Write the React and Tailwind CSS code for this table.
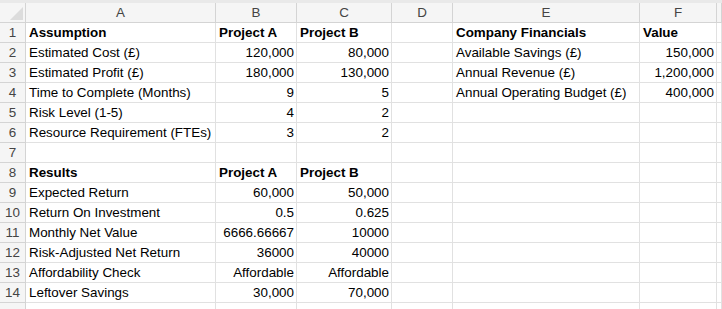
import React from "react";

const cols = ["A", "B", "C", "D", "E", "F", ""];
const rows = [
  [{ t: "Assumption", b: 1 }, { t: "Project A", b: 1 }, { t: "Project B", b: 1 }, {}, { t: "Company Financials", b: 1 }, { t: "Value", b: 1 }],
  [{ t: "Estimated Cost (£)" }, { t: "120,000", r: 1 }, { t: "80,000", r: 1 }, {}, { t: "Available Savings (£)" }, { t: "150,000", r: 1 }],
  [{ t: "Estimated Profit (£)" }, { t: "180,000", r: 1 }, { t: "130,000", r: 1 }, {}, { t: "Annual Revenue (£)" }, { t: "1,200,000", r: 1 }],
  [{ t: "Time to Complete (Months)" }, { t: "9", r: 1 }, { t: "5", r: 1 }, {}, { t: "Annual Operating Budget (£)" }, { t: "400,000", r: 1 }],
  [{ t: "Risk Level (1-5)" }, { t: "4", r: 1 }, { t: "2", r: 1 }, {}, {}, {}],
  [{ t: "Resource Requirement (FTEs)" }, { t: "3", r: 1 }, { t: "2", r: 1 }, {}, {}, {}],
  [{}, {}, {}, {}, {}, {}],
  [{ t: "Results", b: 1 }, { t: "Project A", b: 1 }, { t: "Project B", b: 1 }, {}, {}, {}],
  [{ t: "Expected Return" }, { t: "60,000", r: 1 }, { t: "50,000", r: 1 }, {}, {}, {}],
  [{ t: "Return On Investment" }, { t: "0.5", r: 1 }, { t: "0.625", r: 1 }, {}, {}, {}],
  [{ t: "Monthly Net Value" }, { t: "6666.66667", r: 1 }, { t: "10000", r: 1 }, {}, {}, {}],
  [{ t: "Risk-Adjusted Net Return" }, { t: "36000", r: 1 }, { t: "40000", r: 1 }, {}, {}, {}],
  [{ t: "Affordability Check" }, { t: "Affordable", r: 1 }, { t: "Affordable", r: 1 }, {}, {}, {}],
  [{ t: "Leftover Savings" }, { t: "30,000", r: 1 }, { t: "70,000", r: 1 }, {}, {}, {}],
  [{}, {}, {}, {}, {}, {}],
];

const grid = "grid grid-cols-[26px_190px_81px_95px_61px_187px_77px_1fr]";

export default function App() {
  return (
    <div
      className="w-[722px] h-[309px] overflow-hidden bg-white text-[13.4px] text-black"
      style={{ fontFamily: '"Liberation Sans", Arial, sans-serif' }}
    >
      <div className="h-[3px] bg-[#e9e9e9]" />
      <div className={`${grid} h-[20px] bg-[#f5f5f5] text-[#444]`}>
        <div className="relative border-r border-b border-[#d4d4d4]">
          <svg className="absolute right-[2px] bottom-[2px]" width="13" height="13" viewBox="0 0 13 13">
            <polygon points="13,0 13,13 0,13" fill="#dcdcdc" />
          </svg>
        </div>
        {cols.map((c, i) => (
          <div
            key={i}
            className="flex items-center justify-center border-r border-b border-[#d4d4d4] leading-none"
          >
            {c}
          </div>
        ))}
      </div>
      {rows.map((row, ri) => (
        <div key={ri} className={`${grid} h-[20px]`}>
          <div className="flex items-center justify-center border-r border-b border-[#d4d4d4] bg-[#f5f5f5] text-[#444] leading-none pt-[1px]">
            {ri < 14 ? ri + 1 : ""}
          </div>
          {row.map((cell, ci) => (
            <div
              key={ci}
              className={`flex items-center whitespace-nowrap overflow-visible border-r border-b border-[#e1e1e1] leading-none pt-[1px] ${
                cell.r ? "justify-end pr-[2px]" : "pl-[3px]"
              } ${cell.b ? "font-bold" : ""}`}
            >
              {cell.t || ""}
            </div>
          ))}
          <div className="border-r border-b border-[#e1e1e1]" />
        </div>
      ))}
    </div>
  );
}
